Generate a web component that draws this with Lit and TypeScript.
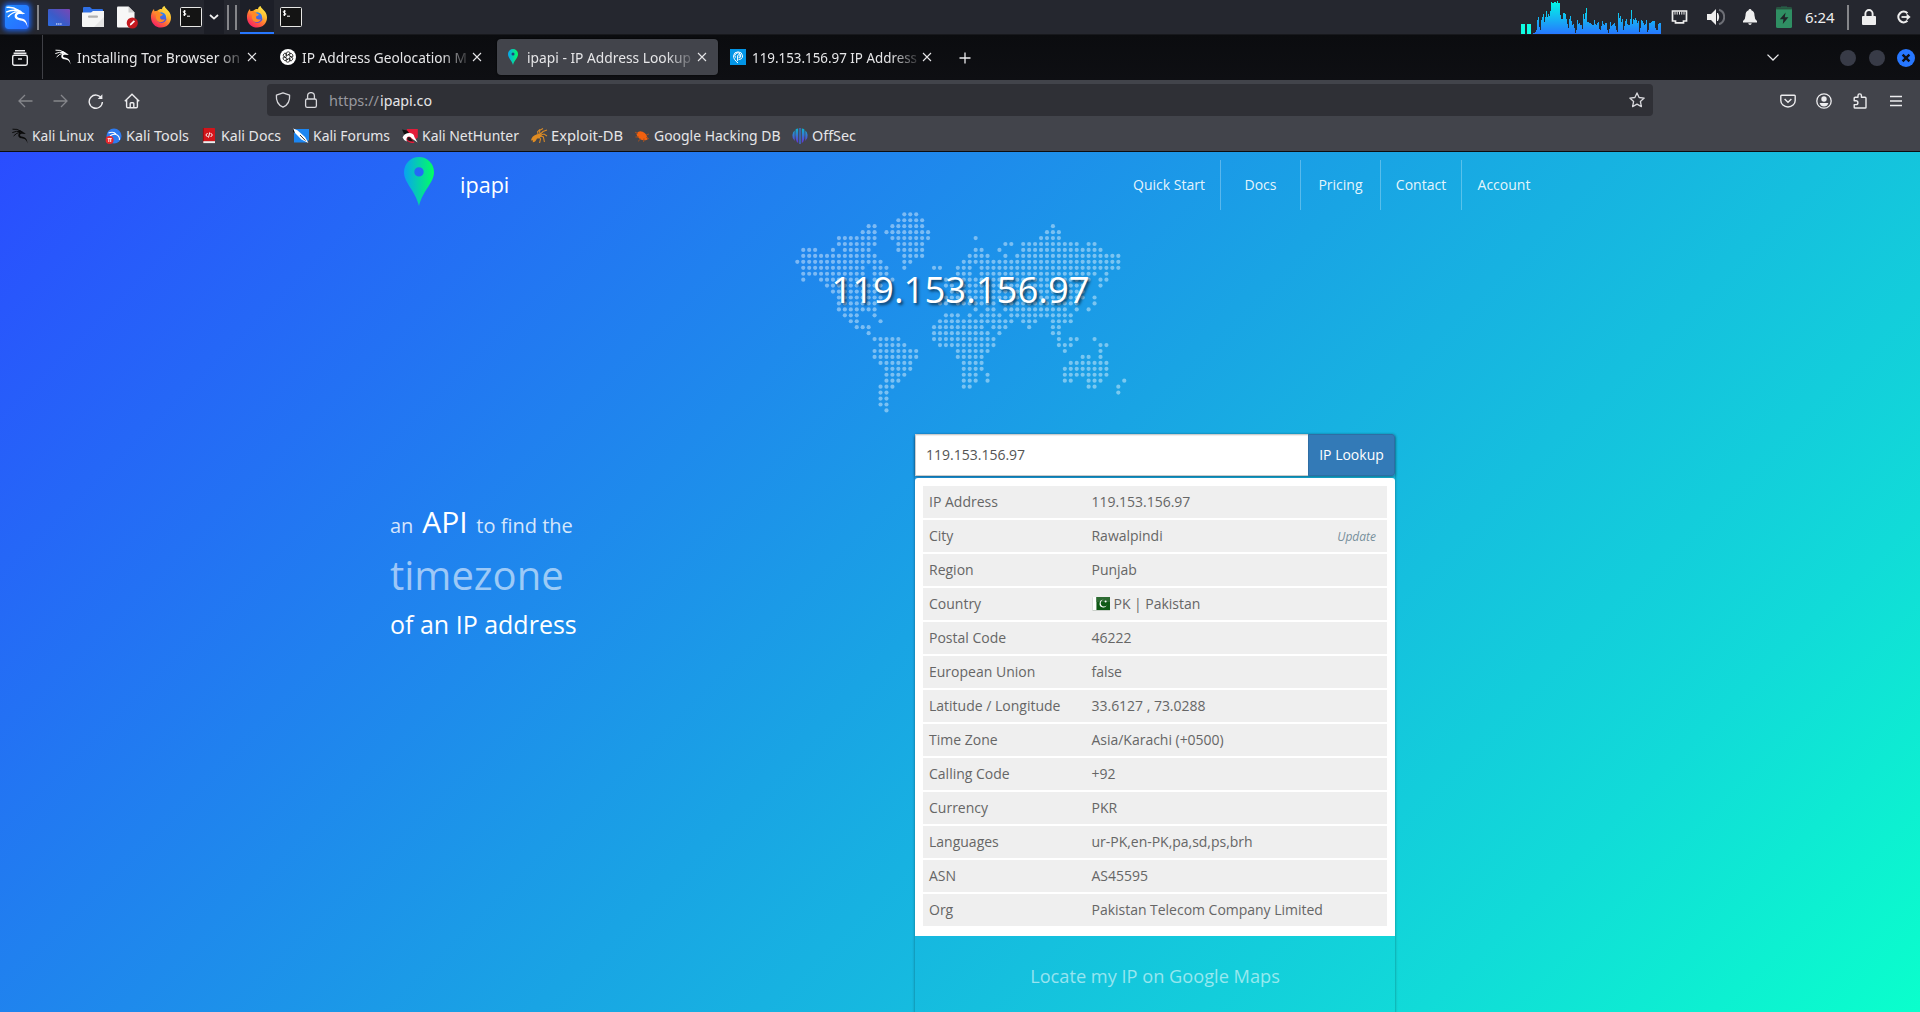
import { LitElement, html, css, svg } from "lit";
import { customElement } from "lit/decorators.js";

type Span = [number, number];

/* Dotted world map: for each row, the inclusive column spans that carry a dot. */
const MAP_ROWS: Span[][] = [
  [[18, 20]],
  [[17, 21]],
  [[12, 13], [16, 21], [43, 43]],
  [[11, 13], [15, 22], [42, 44]],
  [[7, 13], [16, 22], [30, 30], [41, 44]],
  [[7, 13], [17, 21], [35, 36], [38, 47], [49, 50]],
  [[1, 3], [6, 6], [8, 12], [17, 21], [30, 31], [34, 34], [38, 51]],
  [[1, 13], [18, 21], [29, 32], [35, 35], [37, 54]],
  [[0, 14], [18, 19], [28, 54]],
  [[1, 11], [13, 15], [18, 18], [23, 24], [27, 29], [31, 54]],
  [[1, 11], [13, 15], [27, 29], [31, 50], [52, 52]],
  [[1, 1], [4, 11], [13, 14], [16, 16], [25, 26], [28, 49], [51, 52]],
  [[5, 14], [25, 26], [28, 48], [51, 51]],
  [[6, 14], [26, 48]],
  [[7, 14], [25, 48], [50, 50]],
  [[7, 13], [24, 25], [27, 33], [35, 47], [50, 50]],
  [[7, 13], [30, 30], [32, 33], [35, 45], [47, 47], [49, 49]],
  [[8, 10], [13, 13], [25, 27], [29, 29], [31, 34], [36, 46]],
  [[9, 10], [14, 14], [24, 36], [38, 40], [43, 46]],
  [[10, 12], [23, 31], [33, 35], [39, 39], [43, 44]],
  [[12, 12], [23, 32], [34, 34], [43, 44]],
  [[13, 17], [23, 33], [44, 44], [46, 47], [50, 50]],
  [[14, 18], [24, 33], [44, 46], [51, 52]],
  [[13, 20], [27, 32], [45, 45], [51, 51]],
  [[13, 20], [27, 31], [48, 49], [51, 51]],
  [[14, 19], [28, 31], [46, 52]],
  [[15, 19], [28, 31], [45, 52]],
  [[15, 18], [28, 30], [32, 32], [45, 52]],
  [[15, 17], [28, 30], [32, 32], [45, 46], [49, 51], [55, 55]],
  [[14, 16], [28, 29], [49, 50], [54, 54]],
  [[14, 15], [54, 54]],
  [[14, 15]],
  [[14, 15]],
  [[15, 15]],
];

const CPU = [
  1, 1, 2, 4, 14, 17, 7, 4, 14, 17, 20, 12, 17, 23, 17, 20, 18, 23, 32, 31, 31, 32, 32, 31, 33, 31, 31, 19, 15, 15, 21,
  21, 20, 15, 10, 6, 15, 18, 13, 9, 10, 6, 1, 4, 14, 10, 11, 9, 9, 5, 20, 15, 21, 26, 12, 12, 11, 11, 10, 9, 9, 14, 10,
  9, 11, 12, 5, 4, 8, 13, 10, 9, 11, 11, 4, 1, 5, 12, 8, 9, 10, 11, 8, 4, 2, 21, 16, 18, 12, 15, 4, 8, 13, 15, 10, 9, 9,
  15, 24, 10, 15, 14, 16, 14, 11, 13, 2, 6, 14, 13, 11, 9, 10, 14, 2, 4, 11, 11, 12, 13, 13, 13, 6, 4, 4, 10, 11, 11,
];

const ROWS: [string, string][] = [
  ["IP Address", "119.153.156.97"],
  ["City", "Rawalpindi"],
  ["Region", "Punjab"],
  ["Country", "PK | Pakistan"],
  ["Postal Code", "46222"],
  ["European Union", "false"],
  ["Latitude / Longitude", "33.6127 , 73.0288"],
  ["Time Zone", "Asia/Karachi (+0500)"],
  ["Calling Code", "+92"],
  ["Currency", "PKR"],
  ["Languages", "ur-PK,en-PK,pa,sd,ps,brh"],
  ["ASN", "AS45595"],
  ["Org", "Pakistan Telecom Company Limited"],
];

const DRAGON = svg`
  <path d="M.5 1.2Q5 .6 9 3.2M.3 4.6Q4.5 2.6 8.6 3.6M1.6 8Q4.5 4.6 8.4 4.2" fill="none" stroke="currentColor" stroke-width="1"/>
  <path d="M6 2.6C8.2 2.4 10.6 3 11.8 4.6L13.8 5.6L12 6.1C10 5.6 8.2 5.8 8 7.1C8 8.7 10.2 8.6 12.2 9.2C14.6 10 15.2 12.4 15.5 15.4C14.6 12.6 13.6 11.2 11.6 10.7C9 10.3 6.2 9.8 6.3 7.2C6.4 5.4 7.6 4.6 8.6 4.2Z" fill="currentColor"/>`;

const FOX = html`<svg width="22" height="22" viewBox="0 0 22 22">
  <defs>
    <linearGradient id="fx" x1=".85" y1=".05" x2=".2" y2="1">
      <stop offset="0" stop-color="#fff04d"/><stop offset=".35" stop-color="#ffb32c"/>
      <stop offset=".62" stop-color="#ff6a36"/><stop offset="1" stop-color="#f5156c"/>
    </linearGradient>
    <linearGradient id="fb" x1="0" y1="0" x2="0" y2="1">
      <stop offset="0" stop-color="#2b8cf5"/><stop offset="1" stop-color="#5b45d6"/>
    </linearGradient>
  </defs>
  <path d="M1 9.5C1.4 6.2 2.8 4 4 3L4.4 5.2L7.2 4.8C9 3 11 2.8 12 3.2C12 1.8 13 .6 14.6 0C14.8 2.4 19 4 20.5 8.4C22.6 15.4 18 21.6 11 21.6C5 21.6.4 16.6 1 9.5Z" fill="url(#fx)"/>
  <circle cx="11.4" cy="11.6" r="5.3" fill="url(#fb)"/>
  <path d="M4.4 5.6L7.6 5L10.8 7.6L13 8.6C12.5 10 10.8 10 10.2 10.4C9.4 12.6 11.6 14.4 15 13.2C13.5 16.8 8.4 17.2 6.4 13.8C5.4 11 6 8.6 7 7.8Z" fill="#ff8a26"/>
  <path d="M13 3.2C17 5.4 18.2 10 16 13.4C16.6 9.6 15.4 7.4 12.6 6.2Z" fill="#ffc93c"/>
</svg>`;

const TERM = html`<svg width="22" height="20" viewBox="0 0 22 20">
  <rect x=".5" y=".5" width="21" height="19" rx="1" fill="#141414" stroke="#e8e8e6"/>
  <path d="M5.8 4.1H3.9Q3.2 4.1 3.2 4.9Q3.2 5.6 4.3 5.8Q5.9 6 5.9 7Q5.9 7.9 5 7.9H3.1M4.5 3.2V9" fill="none" stroke="#fff" stroke-width="1"/>
  <path d="M7 9.2H10" stroke="#fff" stroke-width="1"/>
</svg>`;

const CLOSE = html`<svg class="x" width="16" height="16" viewBox="0 0 16 16">
  <path d="M4 4L12 12M12 4L4 12" stroke="#e6e6e8" stroke-width="1.1"/></svg>`;

const PIN = (w: number, h: number, id: string) => html`<svg width=${w} height=${h} viewBox="0 0 30 49">
  <defs><linearGradient id=${id} x1="0" x2="1"><stop offset="0" stop-color="#08a4f0"/><stop offset="1" stop-color="#02ff63"/></linearGradient></defs>
  <path fill-rule="evenodd" fill=${`url(#${id})`} d="M15 0A15 15 0 0 1 30 15C30 26 19 33 15 49C11 33 0 26 0 15A15 15 0 0 1 15 0ZM15 10.2A4.7 4.7 0 1 0 15 19.6A4.7 4.7 0 1 0 15 10.2Z"/></svg>`;

/* A label squeezed to an exact advance width. */
const fit = (text: string, w: number, cls = "", size = 15) => html`<svg class="fit ${cls}" width=${w + 1} height="22">
  <text x="0" y="16" font-size=${size} textLength=${w} lengthAdjust="spacingAndGlyphs">${text}</text></svg>`;

@customElement("desktop-panel")
class DesktopPanel extends LitElement {
  static styles = css`
    :host { display: flex; height: 34px; align-items: center; background: #25272f; border-bottom: 1px solid #17181c; color: #eee; }
    .cell { width: 34px; height: 34px; display: flex; align-items: center; justify-content: center; flex: none; }
    .kali { width: 24px; height: 24px; border-radius: 3px; background: linear-gradient(135deg, #1f8cff, #2a6bff); box-shadow: 0 0 5px 2px #1b5fe0; color: #fff; }
    .sep { width: 2px; height: 25px; background: #85868a; flex: none; }
    .s1 { margin: 0 3px; }
    .s2 { margin-left: 3px; }
    .s3 { margin: 0 3px 0 6px; }
    .term { width: 26px; }
    .drop { width: 20px; background: #1c1e26; }
    .on { background: #1d1f28; box-shadow: inset 0 -2px #2777ff; }
    .grow { flex: 1; }
    .load { display: flex; align-items: flex-end; height: 34px; gap: 2px; margin-right: 2px; }
    .load i { width: 4px; height: 10px; background: #0ffce2; }
    svg { display: block; flex: none; }
    .eth { margin-left: 10px; }
    .vol { margin-left: 19px; }
    .bell { margin-left: 18px; }
    .bat { margin-left: 19px; }
    .time { margin: 0 11px 0 13px; font: 15px/34px "Noto Sans", sans-serif; width: 31px; white-space: nowrap; letter-spacing: -0.1px; }
    .lock { margin-left: 13px; }
    .out { margin: 0 9px 0 20px; }
  `;
  render() {
    return html`
      <div class="cell"><svg class="kali" viewBox="-.5 -.5 17 17">${DRAGON}</svg></div>
      <span class="sep s1"></span>
      <div class="cell"><svg width="22" height="17"><defs><linearGradient id="d" x1="0" y1="1" x2="1" y2="0"><stop offset="0" stop-color="#2d6be0"/><stop offset=".45" stop-color="#3b5bc8"/><stop offset="1" stop-color="#7a46b4"/></linearGradient></defs>
        <rect width="22" height="17" rx="1" fill="url(#d)"/><path d="M8 15H14" stroke="#fff" stroke-dasharray="1.4 .7"/></svg></div>
      <div class="cell"><svg width="22" height="20"><path d="M1 1Q1 0 2 0H8L10 2H20Q21 2 21 3V8H1Z" fill="#2f6fe4"/><path d="M0 5.5H9L11 4H22V19Q22 20 21 20H1Q0 20 0 19Z" fill="#f5f5f5"/><path d="M12 20L22 10V20Z" fill="#e4e4e4"/><rect x="6" y="8.6" width="10" height="2.2" rx="1" fill="#b0b0b0"/></svg></div>
      <div class="cell"><svg width="21" height="23" viewBox="0 0 21 23"><path d="M0 1.5Q0 .5 1 .5H11.5L17.5 6.5V20Q17.5 21.5 16.5 21.5H1Q0 21.5 0 20.5Z" fill="#f7f7f7"/><path d="M11.5.5L17.5 6.5H11.5Z" fill="#cfcfcf"/><circle cx="15.3" cy="17" r="5.6" fill="#c4191f"/><path d="M12.8 19.4L13.2 17.8L16.8 14.2L18 15.4L14.4 19Z" fill="#fff"/></svg></div>
      <div class="cell">${FOX}</div>
      <div class="cell term">${TERM}</div>
      <div class="cell drop"><svg width="10" height="6"><path d="M1 1L5 4.6L9 1" fill="none" stroke="#f0f0f0" stroke-width="1.8"/></svg></div>
      <span class="sep s2"></span><span class="sep s3"></span>
      <div class="cell on">${FOX}</div>
      <div class="cell">${TERM}</div>
      <div class="grow"></div>
      <div class="load"><i></i><i></i></div>
      <svg width="128" height="34" shape-rendering="crispEdges">
        <defs><linearGradient id="g" gradientUnits="userSpaceOnUse" x1="0" y1="0" x2="0" y2="34"><stop offset="0" stop-color="#00ffe4"/><stop offset="1" stop-color="#2777ff"/></linearGradient></defs>
        <path fill="url(#g)" d=${CPU.map((h, i) => `M${i} 34V${34 - h}H${i + 1}V34Z`).join("")}></path>
      </svg>
      <svg class="eth" width="17" height="14"><path d="M1.5 1H15.5V11H12.5V12.8H4.5V11H1.5Z" fill="none" stroke="#eee" stroke-width="1.7"/><path d="M4 1.5V4.6M6.2 1.5V4.6M8.5 1.5V4.6M10.8 1.5V4.6M13 1.5V4.6" stroke="#eee"/></svg>
      <svg class="vol" width="18" height="18"><path d="M0 6H4L9 1V17L4 12H0Z" fill="#eee"/><path d="M10.5 5Q13 9 10.5 13Z" fill="#eee" stroke="#eee"/><path d="M12 1.8A7.6 7.6 0 0 1 12 16.2" fill="none" stroke="#6d6f76" stroke-width="2"/></svg>
      <svg class="bell" width="14" height="16"><path d="M7 0Q8.4 0 8.4 1.3Q11.5 2.3 11.5 6.5Q11.5 10 14 12V13.4H0V12Q2.5 10 2.5 6.5Q2.5 2.3 5.6 1.3Q5.6 0 7 0Z" fill="#eee"/><path d="M5.2 14.2H8.8Q8.4 16 7 16Q5.6 16 5.2 14.2Z" fill="#eee"/></svg>
      <svg class="bat" width="16" height="22"><rect x="5" y="0" width="6" height="2" fill="#24493f"/><rect y="1.4" width="16" height="20.6" rx="1.5" fill="#2f8f63"/><rect y="1.4" width="16" height="2" fill="#28533f"/><path d="M9.6 6.5L3.8 13.2H7.4L6.8 18L12.4 11.2H8.8Z" fill="#1f2528"/></svg>
      <span class="time">6:24</span>
      <span class="sep"></span>
      <svg class="lock" width="14" height="16"><rect y="7" width="14" height="9" rx="1" fill="#eee"/><path d="M3.4 8V4.6A3.6 3.6 0 0 1 10.6 4.6V8" fill="none" stroke="#eee" stroke-width="1.9"/></svg>
      <svg class="out" width="15" height="14"><path d="M11.4 3.2A5.3 5.3 0 1 0 11.4 10.8" fill="none" stroke="#eee" stroke-width="2.2"/><path d="M5.5 7H12" stroke="#eee" stroke-width="1.8"/><path d="M10.6 3.6L14.6 7L10.6 10.4Z" fill="#eee"/></svg>
    `;
  }
}

@customElement("browser-chrome")
class BrowserChrome extends LitElement {
  static styles = css`
    :host { display: block; height: 117px; font-family: "Noto Sans", sans-serif; color: #ebebef; }
    svg { display: block; flex: none; }
    .fit text { fill: #e6e6e8; font-family: "Noto Sans", sans-serif; }
    .fit.dim text { fill: #98989e; }
    .tabs { height: 45px; display: flex; align-items: center; background: linear-gradient(#0b0c0f, #0e0f13); box-sizing: border-box; }
    .recent { padding: 0 14px 0 12px; }
    .vline { width: 1px; height: 44px; background: #3f4046; margin-right: 4px; align-self: flex-start; }
    .tab { width: 221px; height: 36px; box-sizing: border-box; padding: 0 8px; margin-right: 4px; border-radius: 4px; display: flex; align-items: center; position: relative; top: -0.5px; }
    .tab.active { background: #42444b; box-shadow: 0 0 2px #000; }
    .title { margin: 1px 0 0 6px; width: 166px; -webkit-mask-image: linear-gradient(90deg, #000 84%, rgba(0, 0, 0, 0.15)); mask-image: linear-gradient(90deg, #000 84%, rgba(0, 0, 0, 0.15)); }
    .x { margin-left: auto; }
    .plus { margin-left: 12px; }
    .grow { flex: 1; }
    .chev { margin-right: 61px; }
    .dot { width: 16px; height: 16px; border-radius: 50%; background: #383b47; margin-right: 13px; }
    .close { margin: 0 5px 0 -1px; }
    .bar { height: 40px; display: flex; align-items: center; background: #42444b; padding: 0 17px 0 18px; }
    .bar > svg { margin-right: 20px; position: relative; top: 0.5px; }
    .bar .home { margin-right: 127px; }
    .url { width: 1386px; height: 32px; box-sizing: border-box; border-radius: 4px; background: #2f3036; display: flex; align-items: center; padding: 0 8px; margin-right: 127px; }
    .url .fit { padding-top: 1px; }
    .url .lk { margin: 0 10px 0 12px; }
    .url .star { margin-left: auto; }
    .bar .last { margin: 0 0 0 1px; }
    .marks { height: 31px; background: #42444b; border-bottom: 1px solid #0c0d10; display: flex; align-items: center; padding-left: 12px; }
    .mark { display: flex; align-items: center; gap: 4px; }
    .mark svg { overflow: visible; }
    .white { color: #fff; }
    .black { color: #0a0a0a; }
  `;

  private mark(icon: unknown, text: string, w: number, pitch: number) {
    return html`<div class="mark" style="width:${pitch}px"><svg width="16" height="16" viewBox="0 0 16 16">${icon}</svg>${fit(text, w)}</div>`;
  }

  private tab(icon: unknown, text: string, w: number, active = false) {
    return html`<div class="tab ${active ? "active" : ""}">${icon}<div class="title">${fit(text, w)}</div>${CLOSE}</div>`;
  }

  render() {
    return html`
      <div class="tabs">
        <svg class="recent" width="16" height="16" viewBox="0 0 16 16" fill="none" stroke="#ececee" stroke-width="1.4"><path d="M3 .7H13M1.6 3.2H14.4"/><rect x=".7" y="5.2" width="14.6" height="10" rx="1.6"/><path d="M6 9H10" /></svg>
        <div class="vline"></div>
        ${this.tab(html`<svg class="white" width="16" height="16" viewBox="0 0 16 16">${DRAGON}</svg>`, "Installing Tor Browser on", 163)}
        ${this.tab(
          html`<svg width="16" height="16" viewBox="0 0 16 16"><circle cx="8" cy="8" r="8" fill="#fff"/><g fill="none" stroke="#111" stroke-width=".8">${[0, 60, 120, 180, 240, 300].map(
            (a) => svg`<path d="M8 6L10.2 4.7Q10.2 2.8 8.3 2.8Q6.4 2.8 6.2 4.6V8" transform="rotate(${a} 8 8)"/>`,
          )}</g></svg>`,
          "IP Address Geolocation M", 165,
        )}
        ${this.tab(html`<svg width="16" height="16" viewBox="0 0 16 16">${svg`
          <defs><linearGradient id="tp" x1="0" x2="1"><stop offset="0" stop-color="#08a4f0"/><stop offset="1" stop-color="#02ff63"/></linearGradient></defs>
          <path fill="url(#tp)" d="M8 0A5 5 0 0 1 13 5C13 9 9.3 11 8 16C6.7 11 3 9 3 5A5 5 0 0 1 8 0Z"/><circle cx="8" cy="5" r="1.5" fill="#20407a"/>`}</svg>`, "ipapi - IP Address Lookup", 164, true)}
        ${this.tab(
          html`<svg width="16" height="16" viewBox="0 0 16 16"><rect width="16" height="16" fill="#0295e6"/><g fill="none" stroke="#fff" stroke-width="1"><path d="M8 14C5 11.5 3.5 9.6 3.5 6.8A4.6 4.6 0 0 1 12.6 6.8C12.6 9.6 10.5 10.6 8.6 10.4"/><path d="M7.6 12V6.8A1.3 1.3 0 1 1 8.6 8.3M5.6 8.6A2.9 2.9 0 1 1 9.6 9"/></g></svg>`,
          "119.153.156.97 IP Address", 165,
        )}
        <svg class="plus" width="12" height="12"><path d="M6 .5V11.5M.5 6H11.5" stroke="#ececee" stroke-width="1.3"/></svg>
        <div class="grow"></div>
        <svg class="chev" width="12" height="7"><path d="M.5.6L6 6L11.5.6" fill="none" stroke="#ececee" stroke-width="1.3"/></svg>
        <div class="dot"></div><div class="dot"></div>
        <svg class="close" width="18" height="18"><circle cx="9" cy="9" r="9" fill="#2777ff"/><path d="M5.6 5.6L12.4 12.4M12.4 5.6L5.6 12.4" stroke="#0e0f13" stroke-width="2.4"/></svg>
      </div>
      <div class="bar">
        <svg width="15" height="14" fill="none" stroke="#85868b" stroke-width="1.3"><path d="M14.5 7H1M7 1L1 7L7 13"/></svg>
        <svg width="15" height="14" fill="none" stroke="#85868b" stroke-width="1.3"><path d="M.5 7H14M8 1L14 7L8 13"/></svg>
        <svg width="16" height="16" fill="none" stroke="#ececee" stroke-width="1.4"><path d="M13.6 5.5A6.6 6.6 0 1 0 14.4 9"/><path d="M14.4 1.3V6H9.7Z" fill="#ececee" stroke="none"/></svg>
        <svg class="home" width="16" height="16" fill="none" stroke="#ececee" stroke-width="1.4"><path d="M.8 8.2L8 1.2L15.2 8.2M2.6 7V13.6Q2.6 14.8 3.8 14.8H12.2Q13.4 14.8 13.4 13.6V7"/><path d="M6.2 14.6V10.6Q6.2 9.8 7 9.8H9Q9.8 9.8 9.8 10.6V14.6"/></svg>
        <div class="url">
          <svg width="16" height="16" fill="none" stroke="#d8d8dc" stroke-width="1.3"><path d="M8 .8L14.6 3.2C15 8.5 12.8 13 8 15.2C3.2 13 1 8.5 1.4 3.2Z" stroke-linejoin="round"/></svg>
          <svg class="lk" width="16" height="16" fill="none" stroke="#d8d8dc" stroke-width="1.3"><rect x="2.6" y="7" width="10.8" height="8.3" rx="1.6"/><path d="M4.6 7V4A3.4 3.4 0 0 1 11.4 4V7"/></svg>
          ${fit("https://", 50, "dim")}${fit("ipapi.co", 52)}
          <svg class="star" width="16" height="16" fill="none" stroke="#d8d8dc" stroke-width="1.3"><path stroke-linejoin="round" d="M8 .9L10.1 5.5L15.2 6.1L11.4 9.5L12.4 14.6L8 12.1L3.6 14.6L4.6 9.5L.8 6.1L5.9 5.5Z"/></svg>
        </div>
        <svg width="16" height="16" fill="none" stroke="#ececee" stroke-width="1.4"><path d="M1.6 2.2H14.4Q15.2 2.2 15.2 3V7.4A7.2 6.6 0 0 1 .8 7.4V3Q.8 2.2 1.6 2.2Z"/><path d="M4.6 6L8 9.2L11.4 6"/></svg>
        <svg width="16" height="16" fill="none" stroke="#ececee" stroke-width="1.3"><circle cx="8" cy="8" r="7.2"/><circle cx="8" cy="6" r="2.7" fill="#ececee" stroke="none"/><path d="M3.6 10H12.4Q11.4 13.6 8 13.6Q4.6 13.6 3.6 10Z" fill="#ececee" stroke="none"/></svg>
        <svg width="16" height="16" fill="none" stroke="#ececee" stroke-width="1.4"><path stroke-linejoin="round" d="M2.2 7.8V5.2Q2.2 4.2 3.2 4.2H6V2.6A1.7 1.7 0 0 1 9.4 2.6V4.2H13Q14 4.2 14 5.2V14.4Q14 15 13.2 15H3Q2.2 15 2.2 14.2V11.6H4A1.9 1.9 0 0 0 4 7.8Z"/></svg>
        <svg class="last" width="14" height="12" stroke="#ececee" stroke-width="1.3"><path d="M1 1.5H13M1 6H13M1 10.5H13"/></svg>
      </div>
      <div class="marks">
        ${this.mark(svg`<g class="black">${DRAGON}</g>`, "Kali Linux", 62, 94)}
        ${this.mark(svg`<circle cx="8" cy="8" r="7.5" fill="#2e7bf0"/><path d="M2.5 5Q8 3 10 6.4Q14 8 13.4 12M4 8Q7 5.4 10 6.6" fill="none" stroke="#fff" stroke-width="1.1"/><circle cx="3.6" cy="12" r="4" fill="#e8262b"/><path d="M1.6 10.6H5.8M2.8 10.6V14M4.7 10.6V14" stroke="#fff" stroke-width=".9"/>`, "Kali Tools", 63, 95)}
        ${this.mark(svg`<rect x="2" y="0" width="12" height="13.4" rx=".5" fill="#d2151b"/><path d="M2.4 0V15" stroke="#9d0c12"/><rect x="2.3" y="13.2" width="11.7" height="1.9" fill="#eee"/><path d="M6.6 5L4.8 7L6.6 9M9.6 5L11.4 7L9.6 9M8.7 4.4L7.5 9.6" fill="none" stroke="#fff" stroke-width="1"/>`, "Kali Docs", 60, 92)}
        ${this.mark(svg`<path d="M1 1H16V12L13.4 14.6H1Z" fill="#1c86f2"/><path d="M0 .6L4.4 2.2L12 9L15.4 15L8.4 11.6L1.6 4.4Z" fill="#fff"/><path d="M0 .4L2 5L0 4Z" fill="#111"/><path d="M7 7L12.4 12.6" stroke="#333" stroke-width="1"/>`, "Kali Forums", 77, 109)}
        ${this.mark(svg`<path d="M5 1H15.8V9.6L12.6 12L3 9Z" fill="#e31c3a"/><path d="M0 1.4L5 2.4L8 6L2 6Z" fill="#111"/><path d="M1 8L5 13L9 15L12.6 15L9 10Z" fill="#e31c3a"/><path d="M.6 9.6Q2.6 4.6 8 5Q12 5.6 12.4 9L15.6 14.6L10 10.6Q8 7.6 5.4 9Q3.6 10.6 4.8 13.6Q1.6 12.6 .6 9.6Z" fill="#fff"/><path d="M5.4 9.4Q8 8.4 9.4 11L11.4 13.6Q8 13.6 5.4 12Z" fill="#1a1a1a"/>`, "Kali NetHunter", 97, 129)}
        ${this.mark(svg`<g stroke="#d98a26" fill="none" stroke-width="1.1"><path d="M9 6L8.5 2.5L12 .5M9.5 6L12 3.5L16 2M10 7L13 6L16 8M9.6 8L12.4 9L13.4 14M8 9L9.5 11L8.6 15M7 6L6.6 3.6L9 1.4"/></g><path d="M0 12.6Q.6 8 5.4 6.6Q9.6 4.8 10.6 7.4Q9.4 10.4 6 10.6Q4.6 14.4 1.6 14.2Q3 11.6 0 12.6Z" fill="#e08c22"/>`, "Exploit-DB", 72, 103)}
        ${this.mark(svg`<path d="M2.4 6Q4.4 1.8 8.6 3.8Q13.4 6 13.6 11.4Q9.4 13.4 6 11Q3 9 2.4 6Z" fill="#f2600f"/><path d="M1 4.2L4 5.4M1.4 9L5 9M4 13.4L7 10.6M9.6 14L10 10.4M12.4 6.8L15 6M12 9L15 11" stroke="#a4501f" stroke-width="1"/>`, "Google Hacking DB", 126.5, 158)}
        ${this.mark(svg`<defs><linearGradient id="of" x1="0" y1="0" x2="0" y2="1"><stop offset="0" stop-color="#0db4d0"/><stop offset="1" stop-color="#6330d8"/></linearGradient></defs><path d="M6.2.6V15Q2.6 13.6 3.6 1.6Q4.6.8 6.2.6M9.8.6V15Q13.4 13.6 12.4 1.6Q11.4.8 9.8.6M2.7 2.6V13Q0 10.6.4 7Q.8 4 2.7 2.6M13.3 2.6V13Q16 10.6 15.6 7Q15.2 4 13.3 2.6" fill="url(#of)"/><rect x="7.3" y="0" width="1.4" height="16" fill="#3d6fd6"/>`, "OffSec", 44, 70)}
      </div>
    `;
  }
}

@customElement("ip-page")
class IpPage extends LitElement {
  static styles = css`
    :host { display: block; height: 860px; overflow: hidden; background: linear-gradient(135deg, #2a4dff 0%, #19a4e4 50%, #11dbd8 82%, #0affcc 100%); font-family: "Open Sans", sans-serif; color: #fff; }
    svg { display: block; flex: none; }
    .head { display: flex; height: 60px; padding-left: 404px; align-items: flex-start; }
    .pin { margin-top: 4.5px; }
    .brand { margin-left: 26px; font-size: 21.6px; line-height: 34px; margin-top: 16px; width: 658px; }
    .nav { display: flex; margin-top: 8px; height: 50px; font-size: 14px; line-height: 49px; color: rgba(255, 255, 255, 0.9); }
    .nav a { box-sizing: border-box; text-align: center; border-right: 1px solid rgba(255, 255, 255, 0.28); width: 80px; }
    .nav a.first { width: 103px; }
    .nav a.wide { width: 81px; }
    .nav a.last { width: 84px; border: 0; }
    .hero { display: grid; height: 222px; justify-items: center; }
    .hero > * { grid-area: 1 / 1; }
    .map { justify-self: start; margin-left: 794px; }
    .ip { font-size: 36.5px; line-height: 50px; margin: 52px 0 0 1px; text-shadow: 2px 2px 3px rgba(0, 0, 0, 0.6); }
    .body { display: flex; padding-left: 390px; align-items: flex-start; }
    .pitch { width: 525px; padding-top: 60px; }
    .l1 { height: 56px; line-height: 55px; font-size: 20px; color: rgba(255, 255, 255, 0.82); white-space: pre; }
    .l1 b { font-weight: 400; font-size: 30px; color: #fff; margin: 0 3.6px; }
    .l2 { height: 49px; line-height: 50px; font-size: 40px; color: rgba(255, 255, 255, 0.56); }
    .l3 { height: 50px; line-height: 50px; font-size: 25px; }
    .box { width: 480px; height: 590px; border-radius: 3px; box-shadow: 0 1px 3px rgba(0, 0, 0, 0.4); }
    .search { display: flex; height: 42px; box-sizing: border-box; box-shadow: 0 1px 3px rgba(0, 0, 0, 0.4); border-radius: 3px; font-size: 14px; }
    .input { width: 393px; box-sizing: border-box; border: 1px solid #ccc; border-right: 0; background: #fff; box-shadow: inset 0 1px 1px rgba(0, 0, 0, 0.075); color: #555; padding-left: 10px; line-height: 39px; }
    .go { flex: 1; box-sizing: border-box; background: #337ab7; border: 1px solid #2e6da4; border-radius: 0 3px 3px 0; text-align: center; line-height: 39px; }
    .card { margin-top: 2px; background: #fff; border-radius: 3px 3px 0 0; padding: 8px 8px 10px; display: grid; gap: 2px; }
    .row { display: flex; height: 32px; background: #efefef; font-size: 14px; line-height: 32px; color: #666; padding: 0 11px 0 6px; }
    .key { width: 162.5px; }
    .val { flex: 1; display: flex; align-items: center; letter-spacing: -0.02px; }
    .flag { margin: 0 4px 0 0; }
    .upd { font-size: 12px; font-style: italic; color: #78909c; line-height: 34px; }
    .locate { text-align: center; font-size: 18.2px; line-height: 80px; color: rgba(255, 255, 255, 0.56); }
  `;
  render() {
    return html`
      <div class="head">
        <div class="pin">${PIN(30, 49, "pg")}</div>
        <div class="brand">ipapi</div>
        <div class="nav"><a class="first">Quick Start</a><a>Docs</a><a>Pricing</a><a class="wide">Contact</a><a class="last">Account</a></div>
      </div>
      <div class="hero">
        <svg class="map" width="340" height="205"><g fill="#fff" fill-opacity=".42">
          ${MAP_ROWS.flatMap((spans, r) =>
            spans.flatMap(([a, b]) =>
              Array.from({ length: b - a + 1 }, (_, i) => svg`<circle cx=${3.3 + (a + i) * 5.945} cy=${2.3 + r * 5.943} r="2.1"/>`),
            ),
          )}</g></svg>
        <div class="ip">119.153.156.97</div>
      </div>
      <div class="body">
        <div class="pitch">
          <div class="l1">an <b>API</b> to find the</div>
          <div class="l2">timezone</div>
          <div class="l3">of an IP address</div>
        </div>
        <div class="box">
          <div class="search"><div class="input">119.153.156.97</div><div class="go">IP Lookup</div></div>
          <div class="card">
            ${ROWS.map(
              ([k, v]) => html`<div class="row"><span class="key">${k}</span><span class="val">${k === "Country"
                ? html`<svg class="flag" width="18" height="14"><rect x=".5" y=".5" width="17.5" height="13.5" fill="#c9cfc9"/><rect x="1" width="3.5" height="13" fill="#fff"/><rect x="4.5" width="13.5" height="13" fill="#0f5a16"/><rect x="4.5" width="13.5" height="5" fill="#2d6b32"/><path d="M11.6 2.8A3.8 3.8 0 1 0 14.8 8.2A3.4 3.4 0 1 1 11.6 2.8Z" fill="#fff"/><circle cx="13.6" cy="4.4" r="1" fill="#fff"/></svg>`
                : ""}${v}</span>${k === "City" ? html`<span class="upd">Update</span>` : ""}</div>`,
            )}
          </div>
          <div class="locate">Locate my IP on Google Maps</div>
        </div>
      </div>
    `;
  }
}

@customElement("app-root")
class AppRoot extends LitElement {
  static styles = css`
    :host { display: block; width: 1920px; height: 1012px; overflow: hidden; }
  `;
  render() {
    return html`<desktop-panel></desktop-panel><browser-chrome></browser-chrome><ip-page></ip-page>`;
  }
}
